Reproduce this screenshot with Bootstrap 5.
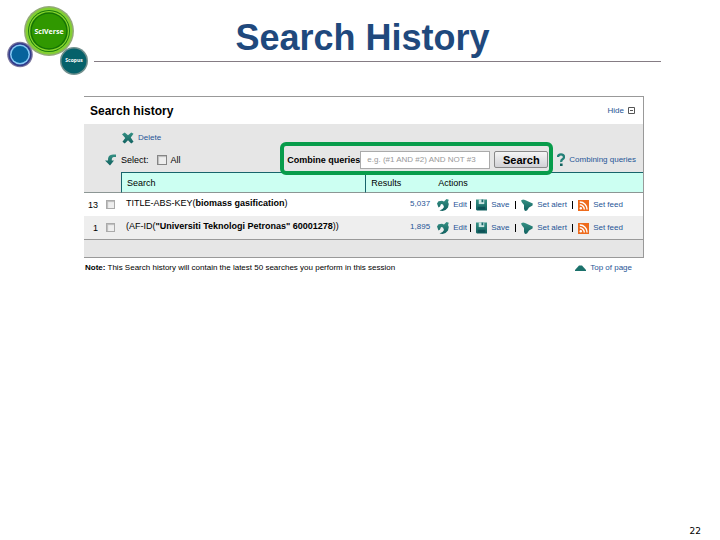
<!DOCTYPE html>
<html lang="en">
<head>
<meta charset="utf-8">
<meta name="viewport" content="width=device-width, initial-scale=1">
<title>Search History</title>
<link href="https://cdn.jsdelivr.net/npm/bootstrap@5.3.0/dist/css/bootstrap.min.css" rel="stylesheet">
<style>
body{font-family:"Liberation Sans",Arial,sans-serif;font-size:9px;line-height:12px;color:#000;background:#fff}
.brand{width:94px;height:78px}
.slide-title{font-size:36px;line-height:42px;font-weight:700;color:#1f497d;padding:17px 30px 2px 0;border-bottom:1px solid #857c84;margin-right:59px}
.slide-main{margin:18px 76px 0 84px}
.history{border:1px solid #999;border-left:0;background:#e6e6e6}
.history-head{background:#fff;height:27px;padding:0 8px 0 6px}
.history-head h2{font-size:12px;line-height:16px;font-weight:700}
a{color:#1f5596;text-decoration:none}
.link-text{font-size:8px;line-height:12px}
.toolbar{height:48px;padding-right:7px}
.tools{padding:8px 0 0 21px}
.delete-link{padding-left:17px;margin-bottom:10px}
input[type=checkbox]{appearance:none;width:10px;height:10px;margin:0;border:1px solid #858585;background:#eee;box-shadow:inset 1px 1px 1px #bbb;flex:none}
input[type=checkbox]:checked{background:#1f5596}
.history-table input[type=checkbox]{width:9px;height:9px;border-color:#aaa}
.combine{border:4px solid #089c4b;border-radius:6px;width:273px;height:33px;padding:2px 1px 0 3px;margin-bottom:-3px;z-index:1;background:#e6e6e6}
.combine label{font-weight:700}
.query{width:130px;height:18px;border:1px solid #aaa;font-size:8px;padding:0 6px;background:#fff;min-width:0}
.query::placeholder{color:#999;opacity:1}
.search-btn{height:17px;width:54px;border:1px solid #888;border-radius:2px;background:linear-gradient(#f5f5f5,#d2d2d6);font-size:11px;line-height:12px;font-weight:700;padding:0;color:#000}
.help{padding-bottom:6px}
.history-table{table-layout:fixed;border-collapse:separate;border-spacing:0}
.history-table th,.history-table td{padding:0;vertical-align:middle;border-bottom:0 solid}
.history-table thead th{height:21px;border-top:1px solid #17646b;border-bottom:1px solid #8c9694;background:#ccfff2;font-weight:400}
.history-table thead th:first-child{background:#e6e6e6;border-top-color:#e6e6e6}
.history-table thead th:nth-child(2),.history-table thead th:nth-child(3){border-left:1px solid #17646b;padding-left:5px}
.history-table thead th:last-child{padding-left:7px}
.history-table tbody td{height:23px;padding-bottom:3px}
.history-table tbody tr:first-child td{background:#fff}
.history-table tbody tr:last-child td{background:#eee}
.history-table .pick{padding:0 6px 0 0}
.history-table .query-cell{padding-left:5px}
.history-table .count{padding-right:1px}
.history-table .actions{padding:1px 0 0 6px}
.actions a{display:flex;align-items:center;gap:4px;font-size:8px;white-space:nowrap}
.act-edit{width:33px}.act-save{width:39px}.act-alert{width:51px}
.bar{width:1px;height:8px;margin-right:5px;background:#000}
.history-foot{height:18px;border-top:1px solid #999}
.note{font-size:8px;line-height:12px;padding:4px 12px 0 1px}
.page-no{font-family:"DejaVu Sans",sans-serif;font-size:9px;line-height:12px;padding:0 19px 3px 0}
</style>
<script src="https://cdn.jsdelivr.net/npm/bootstrap@5.3.0/dist/js/bootstrap.bundle.min.js"></script>
</head>
<body class="d-flex flex-column min-vh-100">
<svg class="position-absolute" width="0" height="0" aria-hidden="true">
<defs>
<linearGradient id="teal" x1="0" y1="0" x2="0" y2="1"><stop offset="0" stop-color="#369184"/><stop offset="1" stop-color="#10605f"/></linearGradient>
<symbol id="i-edit" viewBox="0 0 12 12"><path d="M0 4.500 1.500 2.200 5 1.800 7 2.500 9.500 0 11.800 .8 11 3 11.800 5 11 8.500 8.500 11 5.500 12 2.500 11.500 5.500 10 7 8 6 5.500 4 5 3 7.500 1.500 8.500Z" fill="url(#teal)"/></symbol>
<symbol id="i-save" viewBox="0 0 12 12"><path d="M0 0H12V12H1L0 11Z" fill="url(#teal)"/><path d="M3 0H9V5H3Z" fill="#c9e5e2"/><path d="M6 0H8V3H6Z" fill="#17696b"/><path d="M2 8H10V11H2Z" fill="#0d5257"/></symbol>
<symbol id="i-alert" viewBox="0 0 12 12"><path d="M0 1.500 2 .5 4 1 11.800 4.500 11.500 6.500 8 8.500 6 11.500 4 12 3 10 3 6 1 3.500Z" fill="url(#teal)"/></symbol>
<symbol id="i-feed" viewBox="0 0 11 11"><path d="M0 0H11V11H0Z" fill="#ee6b1c"/><circle cx="2.800" cy="8.300" r="1.200" fill="#fff"/><path d="M1.800 4.800A4.500 4.500 0 0 1 6.300 9.400M1.800 2A7.300 7.300 0 0 1 9.100 9.400" fill="none" stroke="#fff" stroke-width="1.400"/></symbol>
</defs>
</svg>
<header class="d-flex align-items-start">
<svg class="brand flex-shrink-0" viewBox="0 0 94 78" role="img" aria-label="SciVerse Scopus">
<circle cx="49" cy="31" r="25" fill="#93a979"/><circle cx="49" cy="31" r="23.500" fill="#83cf32"/><circle cx="49" cy="31" r="21" fill="#187b0c"/><circle cx="49" cy="31" r="20" fill="#89d52c"/><circle cx="49" cy="31" r="18.800" fill="#157405"/><circle cx="49" cy="31" r="17.300" fill="#309800"/>
<circle cx="20" cy="54.500" r="12.800" fill="#77749d"/><circle cx="20" cy="54.500" r="11.500" fill="#303b8c"/><circle cx="20" cy="54.500" r="10" fill="#88cbf5"/><circle cx="20" cy="54.500" r="8.500" fill="#06639c"/>
<circle cx="74" cy="61" r="14" fill="#71908e"/><circle cx="74" cy="61" r="12.500" fill="#05616a"/>
<text x="49" y="34" text-anchor="middle" font-size="7" font-weight="700" font-family="Open Sans,sans-serif" fill="#fff">SciVerse</text>
<text x="74" y="62" text-anchor="middle" font-size="5" font-weight="700" font-family="Open Sans,sans-serif" fill="#fff">Scopus</text>
</svg>
<h1 class="slide-title flex-grow-1 mb-0 text-center">Search History</h1>
</header>
<main class="slide-main">
<section class="history">
<div class="history-head d-flex align-items-center justify-content-between">
<h2 class="mb-0">Search history</h2>
<a href="#" class="link-text d-flex align-items-center gap-1">Hide
<svg width="7" height="7" viewBox="0 0 7 7"><path d="M.5.5H6.500V6.500H.5ZM2 3.500H5" fill="#fff" stroke="#555"/></svg></a>
</div>
<div class="toolbar d-flex justify-content-between">
<div class="tools">
<a href="#" class="delete-link link-text d-flex align-items-center gap-1"><svg width="12" height="12" viewBox="0 0 13 12"><path d="M0 2 3 0 6.500 3 10 0 12.500 1.500 9.500 5.500 12.500 10 10 12 6.500 8.500 3 12 .5 10 3.500 6Z" fill="url(#teal)"/></svg>Delete</a>
<div class="d-flex align-items-center gap-1">
<svg width="12" height="12" viewBox="0 0 12 12"><path d="M11 .5V3H9Q6.500 3 6.800 6.500H9L5 11.500 0 6.500H3Q2.500.5 8 .5Z" fill="url(#teal)"/></svg>
<span>Select:</span>
<span class="d-flex align-items-center ms-1"><input type="checkbox" id="all"><label for="all" class="ps-1">All</label></span>
</div>
</div>
<div class="d-flex align-items-end">
<form class="combine position-relative d-flex align-items-center">
<label for="query">Combine queries</label>
<input id="query" class="query ms-auto me-1" type="text" placeholder="e.g. (#1 AND #2) AND NOT #3">
<button type="button" class="search-btn">Search</button>
</form>
<a href="#" class="help link-text d-flex align-items-center ms-1 gap-1"><svg width="8" height="13" viewBox="0 0 8 13"><path d="M1 4Q1 1.300 4 1.300T7 4Q7 5.500 5.500 6.300T4.300 9" fill="none" stroke="#238078" stroke-width="2.300"/><path d="M3 10.500H5.600V13H3Z" fill="#14635f"/></svg>Combining queries</a>
</div>
</div>
<table class="history-table w-100">
<colgroup><col style="width:6.6%"><col style="width:43.7%"><col style="width:11.8%"><col></colgroup>
<thead><tr><th></th><th>Search</th><th>Results</th><th>Actions</th></tr></thead>
<tbody>
<tr>
<td class="pick"><div class="d-flex align-items-center justify-content-end gap-1"><label for="q13" class="pe-1">13</label><input type="checkbox" id="q13"></div></td>
<td class="query-cell">TITLE-ABS-KEY(<b>biomass gasification</b>)</td>
<td class="count text-end"><a href="#" class="link-text">5,037</a></td>
<td class="actions"><div class="d-flex align-items-center">
<a href="#" class="act-edit"><svg width="12" height="12"><use href="#i-edit"/></svg>Edit</a><span class="bar"></span>
<a href="#" class="act-save"><svg width="11" height="12"><use href="#i-save"/></svg>Save</a><span class="bar"></span>
<a href="#" class="act-alert"><svg width="12" height="12"><use href="#i-alert"/></svg>Set alert</a><span class="bar"></span>
<a href="#"><svg width="11" height="11"><use href="#i-feed"/></svg>Set feed</a></div></td>
</tr>
<tr>
<td class="pick"><div class="d-flex align-items-center justify-content-end gap-1"><label for="q1" class="pe-1">1</label><input type="checkbox" id="q1"></div></td>
<td class="query-cell">(AF-ID(<b>"Universiti Teknologi Petronas" 60001278</b>))</td>
<td class="count text-end"><a href="#" class="link-text">1,895</a></td>
<td class="actions"><div class="d-flex align-items-center">
<a href="#" class="act-edit"><svg width="12" height="12"><use href="#i-edit"/></svg>Edit</a><span class="bar"></span>
<a href="#" class="act-save"><svg width="11" height="12"><use href="#i-save"/></svg>Save</a><span class="bar"></span>
<a href="#" class="act-alert"><svg width="12" height="12"><use href="#i-alert"/></svg>Set alert</a><span class="bar"></span>
<a href="#"><svg width="11" height="11"><use href="#i-feed"/></svg>Set feed</a></div></td>
</tr>
</tbody>
</table>
<div class="history-foot"></div>
</section>
<div class="note d-flex justify-content-between">
<span><b>Note:</b> This Search history will contain the latest 50 searches you perform in this session</span>
<a href="#" class="d-flex align-items-center gap-1"><svg width="11" height="6" viewBox="0 0 11 6"><path d="M0 6V5L4 .5H7L11 5V6Z" fill="#1b716b"/></svg>Top of page</a>
</div>
</main>
<footer class="page-no mt-auto text-end">22</footer>
</body>
</html>
